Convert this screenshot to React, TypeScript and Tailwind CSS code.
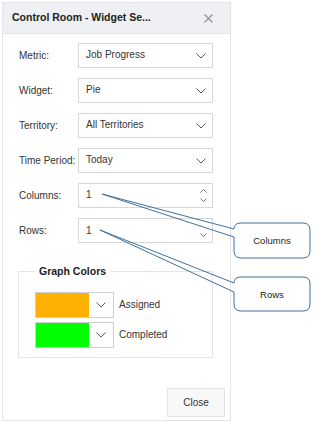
import React from "react";

const Chevron = ({ className = "" }: { className?: string }) => (
  <svg width="10" height="6" viewBox="0 0 10 6" className={className}>
    <polyline points="0.5,0.5 5,5 9.5,0.5" fill="none" stroke="#555" strokeWidth="1" />
  </svg>
);

const SmallArrow = ({ up = false }: { up?: boolean }) => (
  <svg width="7" height="4" viewBox="0 0 7 4">
    <polyline points={up ? "0.5,3.5 3.5,0.5 6.5,3.5" : "0.5,0.5 3.5,3.5 6.5,0.5"} fill="none" stroke="#777" strokeWidth="1" />
  </svg>
);

const fields = [
  { label: "Metric:", value: "Job Progress" },
  { label: "Widget:", value: "Pie" },
  { label: "Territory:", value: "All Territories" },
  { label: "Time Period:", value: "Today" },
];

const colors = [
  { name: "Assigned", color: "bg-[#ffb000]" },
  { name: "Completed", color: "bg-[#00ff00]" },
];

export default function App() {
  return (
    <div className="relative w-[313px] h-[422px] bg-white overflow-hidden text-[#333]" style={{ fontFamily: '"Liberation Sans", Arial, sans-serif' }}>
      <div className="ml-[2px] mt-[2px] w-[229px] h-[419px] border border-[#e2e4e8] flex flex-col">
        {/* header */}
        <div className="h-[31px] bg-[#eef0f3] border-b border-[#e2e4e8] flex items-center justify-between pl-[9px] pr-[17px]">
          <span className="text-[10.5px] font-bold text-[#222] whitespace-nowrap">Control Room - Widget Se...</span>
          <svg width="9" height="9" viewBox="0 0 9 9">
            <path d="M0.5 0.5 L8.5 8.5 M8.5 0.5 L0.5 8.5" stroke="#8a909a" strokeWidth="1.1" />
          </svg>
        </div>

        {/* form */}
        <div className="flex flex-col gap-[10px] pt-[9px] pl-[16px]">
          {fields.map((f) => (
            <div key={f.label} className="flex items-center">
              <span className="w-[59px] text-[10px] whitespace-nowrap">{f.label}</span>
              <div className="w-[135px] h-[25px] border border-[#d6d8dc] flex items-center justify-between pl-[7px] pr-[6px]">
                <span className="text-[10px] -mt-[3px]">{f.value}</span>
                <Chevron />
              </div>
            </div>
          ))}
          <div className="flex items-center">
            <span className="w-[59px] text-[10px]">Columns:</span>
            <div className="w-[135px] h-[25px] border border-[#d6d8dc] flex items-center justify-between pl-[7px] pr-[5px]">
              <span className="text-[10px] -mt-[3px]">1</span>
              <div className="flex flex-col gap-[5px]">
                <SmallArrow up />
                <SmallArrow />
              </div>
            </div>
          </div>
          <div className="flex items-center">
            <span className="w-[59px] text-[10px]">Rows:</span>
            <div className="w-[135px] h-[25px] border border-[#d6d8dc] flex justify-between pl-[7px] pr-[5px]">
              <span className="text-[10px] mt-[4px]">1</span>
              <div className="flex flex-col justify-end pb-[5px]">
                <SmallArrow />
              </div>
            </div>
          </div>
        </div>

        {/* graph colors */}
        <fieldset className="ml-[15px] mt-[21px] w-[195px] h-[94px] border border-[#e2e4e8] px-[16px] pt-[12px]">
          <legend className="px-[4px] text-[10.5px] font-bold text-[#222]">Graph Colors</legend>
          <div className="flex flex-col gap-[4px]">
            {colors.map((c) => (
              <div key={c.name} className="flex items-center gap-[5px]">
                <div className="w-[79px] h-[26px] border border-[#ccd0d4] flex">
                  <div className={`w-[53px] h-full ${c.color}`} />
                  <div className="flex-1 flex items-center justify-center">
                    <Chevron />
                  </div>
                </div>
                <span className="text-[10px]">{c.name}</span>
              </div>
            ))}
          </div>
        </fieldset>

        {/* footer */}
        <div className="mt-auto flex justify-end pr-[5px] pb-[3px]">
          <button className="w-[58px] h-[29px] border border-[#e2e4e8] bg-[#f8f8f9] text-[10px] text-[#333]">Close</button>
        </div>
      </div>

      {/* callouts */}
      <svg className="absolute left-0 top-0 pointer-events-none" width="313" height="422" viewBox="0 0 313 422">
        <path
          d="M234,229 L102,194 L234,237 L234,251 Q234,258 241,258 L303,258 Q310,258 310,251 L310,230 Q310,223 303,223 L241,223 Q234,223 234,229"
          fill="none"
          stroke="#41719c"
          strokeWidth="1"
        />
        <path
          d="M234,283 L100,230 L234,292 L234,304 Q234,311 241,311 L303,311 Q310,311 310,304 L310,284 Q310,277 303,277 L241,277 Q234,277 234,283"
          fill="none"
          stroke="#41719c"
          strokeWidth="1"
        />
        <text x="272" y="244" textAnchor="middle" fontSize="9.5" fill="#222" fontFamily="Liberation Sans, Arial, sans-serif">Columns</text>
        <text x="272" y="298" textAnchor="middle" fontSize="9.5" fill="#222" fontFamily="Liberation Sans, Arial, sans-serif">Rows</text>
      </svg>
    </div>
  );
}
